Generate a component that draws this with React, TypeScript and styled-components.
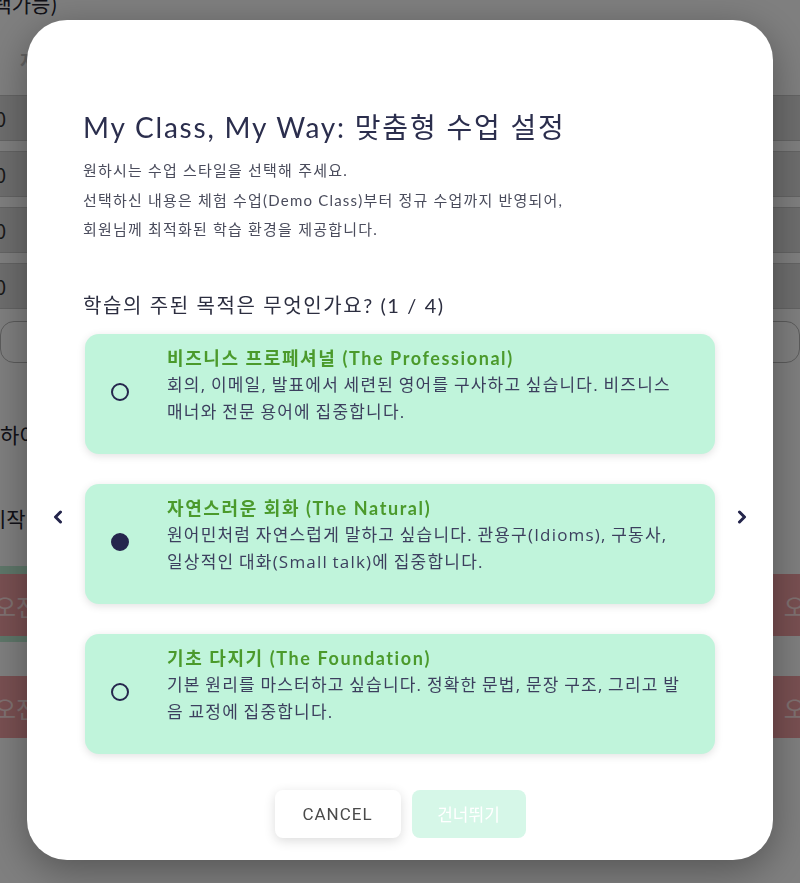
import { useState } from "react";
import { createGlobalStyle, styled, css } from "styled-components";

const GlobalStyle = createGlobalStyle`
  html, body {
    margin: 0;
    padding: 0;
    background: #ffffff;
    font-family: "Noto Sans CJK KR", "Noto Sans", sans-serif;
    overflow: hidden;
  }
  * { box-sizing: border-box; }
`;

const fontStack = `Lato, "Noto Sans CJK KR", sans-serif`;
const bodyStack = `"Open Sans", "Noto Sans CJK KR", sans-serif`;

/* ---------- page behind the dialog ---------- */

const Page = styled.div`
  height: 883px;
  overflow: hidden;
  color: #23232f;
`;

const PageLabel = styled.div`
  margin: -9px 0 0 -34px;
  font-size: 21px;
  line-height: 24px;
  white-space: nowrap;
`;

const FieldCaption = styled.div`
  margin: 32px 0 0 20px;
  font-size: 18px;
  font-weight: 700;
  color: #c4c4c4;
`;

const FieldList = styled.div`
  display: flex;
  flex-direction: column;
  gap: 10px;
  margin: 22px -10px 0 -20px;
`;

const FieldRow = styled.div`
  height: 46px;
  display: flex;
  align-items: center;
  padding-left: 4px;
  background: #dcdcdc;
  border-top: 1px solid #c8c8c8;
  border-bottom: 1px solid #c8c8c8;
  font-size: 20px;
  color: #333;
`;

const OutlineBox = styled.div`
  height: 42px;
  margin: 12px 0 0 0;
  border: 1px solid #b8b8b8;
  border-radius: 14px;
`;

const PageLine = styled.div<{ $top: number; $left: number }>`
  margin: ${(p) => p.$top}px 0 0 ${(p) => p.$left}px;
  font-size: 21px;
  line-height: 28px;
  white-space: nowrap;
`;

const TimeBlock = styled.div`
  margin-top: 34px;
  background: linear-gradient(to right, #bdeed3 0 760px, transparent 760px);
  padding: 8px 0 6px;
`;

const TimeRow = styled.div<{ $gap?: number }>`
  height: 62px;
  margin-top: ${(p) => p.$gap ?? 0}px;
  display: flex;
  align-items: center;
  justify-content: space-between;
  background: #f3a0a4;
  color: #ffe3e3;
  font-size: 24px;
  span:first-child { margin-left: -6px; }
  span:last-child { margin-right: -28px; }
`;

/* ---------- dialog ---------- */

const Overlay = styled.div`
  position: fixed;
  inset: 0;
  background: rgba(0, 0, 0, 0.5);
  display: flex;
  align-items: center;
  justify-content: center;
`;

const Dialog = styled.div`
  width: 746px;
  height: 840px;
  margin-top: -3px;
  background: #ffffff;
  border-radius: 40px;
  box-shadow: 0 10px 40px rgba(0, 0, 0, 0.35);
  padding: 87px 56px 23px;
  display: flex;
  flex-direction: column;
  font-family: ${fontStack};
`;

const Title = styled.h2`
  margin: 0;
  font-size: 28px;
  line-height: 40px;
  font-weight: 400;
  letter-spacing: 1.8px;
  color: #2b2e4d;
`;

const Intro = styled.p`
  margin: 9px 0 0;
  font-size: 15px;
  line-height: 29.5px;
  letter-spacing: 1.2px;
  color: #4a4c5c;
`;

const Question = styled.h3`
  margin: 45px 0 0;
  font-size: 20px;
  line-height: 30px;
  font-weight: 400;
  letter-spacing: 1.6px;
  color: #2c2e40;
`;

const Carousel = styled.div`
  margin: 14px -56px 0;
  display: flex;
  align-items: flex-start;
  justify-content: center;
  gap: 21px;
`;

const ArrowButton = styled.button`
  width: 12px;
  height: 20px;
  margin-top: 173px;
  padding: 0;
  border: none;
  background: none;
  color: #24254b;
  cursor: pointer;
  display: flex;
  align-items: center;
  justify-content: center;
`;

const Options = styled.div`
  width: 630px;
  display: flex;
  flex-direction: column;
  gap: 30px;
`;

const OptionCard = styled.label`
  height: 120px;
  display: flex;
  align-items: flex-start;
  gap: 38px;
  padding: 11px 29px 0 26px;
  background: #c0f4db;
  border-radius: 14px;
  box-shadow: 0 2px 9px rgba(0, 0, 0, 0.12);
  cursor: pointer;
`;

const Radio = styled.span<{ $checked: boolean }>`
  flex: none;
  align-self: center;
  width: 18px;
  height: 18px;
  margin-top: -14px;
  border-radius: 50%;
  border: 2px solid #25264d;
  ${(p) =>
    p.$checked &&
    css`
      background: #25264d;
    `}
`;

const OptionText = styled.div`
  display: flex;
  flex-direction: column;
`;

const OptionTitle = styled.div`
  font-size: 18px;
  line-height: 26px;
  font-weight: 700;
  letter-spacing: 1.6px;
  color: #4b9a2c;
`;

const OptionDesc = styled.div`
  font-family: ${bodyStack};
  font-size: 17px;
  line-height: 27px;
  letter-spacing: 1.2px;
  word-spacing: -1px;
  color: #3c3f5e;
`;

const Actions = styled.div`
  margin-top: 36px;
  display: flex;
  justify-content: center;
  gap: 11px;
`;

const ActionButton = styled.button<{ $variant: "plain" | "mint" }>`
  height: 48px;
  border: none;
  border-radius: 8px;
  font-size: 17px;
  cursor: pointer;
  ${(p) =>
    p.$variant === "plain"
      ? css`
          width: 126px;
          background: #ffffff;
          color: #4a4a4a;
          letter-spacing: 1px;
          font-family: Roboto, "Liberation Sans", sans-serif;
          box-shadow: 0 3px 12px rgba(0, 0, 0, 0.14);
        `
      : css`
          width: 114px;
          background: #d6f7e8;
          color: #ffffff;
          font-family: ${fontStack};
        `}
`;

const Chevron = ({ dir }: { dir: "left" | "right" }) => (
  <svg width="10" height="14" viewBox="0 0 10 14" fill="none">
    <path
      d={dir === "left" ? "M7.5 2 L2.5 7 L7.5 12" : "M2.5 2 L7.5 7 L2.5 12"}
      stroke="currentColor"
      strokeWidth="3"
      strokeLinecap="round"
      strokeLinejoin="round"
    />
  </svg>
);

const options = [
  {
    title: "비즈니스 프로페셔널 (The Professional)",
    desc: "회의, 이메일, 발표에서 세련된 영어를 구사하고 싶습니다. 비즈니스 매너와 전문 용어에 집중합니다.",
  },
  {
    title: "자연스러운 회화 (The Natural)",
    desc: "원어민처럼 자연스럽게 말하고 싶습니다. 관용구(Idioms), 구동사, 일상적인 대화(Small talk)에 집중합니다.",
  },
  {
    title: "기초 다지기 (The Foundation)",
    desc: "기본 원리를 마스터하고 싶습니다. 정확한 문법, 문장 구조, 그리고 발음 교정에 집중합니다.",
  },
];

export default function App() {
  const [selected, setSelected] = useState(1);

  return (
    <>
      <GlobalStyle />
      <Page>
        <PageLabel>(선택가능)</PageLabel>
        <FieldCaption>저장</FieldCaption>
        <FieldList>
          <FieldRow>10</FieldRow>
          <FieldRow>20</FieldRow>
          <FieldRow>30</FieldRow>
          <FieldRow>40</FieldRow>
        </FieldList>
        <OutlineBox />
        <PageLine $top={57} $left={0}>
          하이
        </PageLine>
        <PageLine $top={56} $left={-13}>
          시작
        </PageLine>
        <TimeBlock>
          <TimeRow>
            <span>오전</span>
            <span>오전</span>
          </TimeRow>
        </TimeBlock>
        <TimeRow $gap={34}>
          <span>오전</span>
          <span>오전</span>
        </TimeRow>
      </Page>

      <Overlay>
        <Dialog>
          <Title>My Class, My Way: 맞춤형 수업 설정</Title>
          <Intro>
            원하시는 수업 스타일을 선택해 주세요.
            <br />
            선택하신 내용은 체험 수업(Demo Class)부터 정규 수업까지 반영되어,
            <br />
            회원님께 최적화된 학습 환경을 제공합니다.
          </Intro>
          <Question>학습의 주된 목적은 무엇인가요? (1 / 4)</Question>
          <Carousel>
            <ArrowButton aria-label="이전">
              <Chevron dir="left" />
            </ArrowButton>
            <Options>
              {options.map((o, i) => (
                <OptionCard key={o.title} onClick={() => setSelected(i)}>
                  <Radio $checked={selected === i} />
                  <OptionText>
                    <OptionTitle>{o.title}</OptionTitle>
                    <OptionDesc>{o.desc}</OptionDesc>
                  </OptionText>
                </OptionCard>
              ))}
            </Options>
            <ArrowButton aria-label="다음">
              <Chevron dir="right" />
            </ArrowButton>
          </Carousel>
          <Actions>
            <ActionButton $variant="plain">CANCEL</ActionButton>
            <ActionButton $variant="mint">건너뛰기</ActionButton>
          </Actions>
        </Dialog>
      </Overlay>
    </>
  );
}
